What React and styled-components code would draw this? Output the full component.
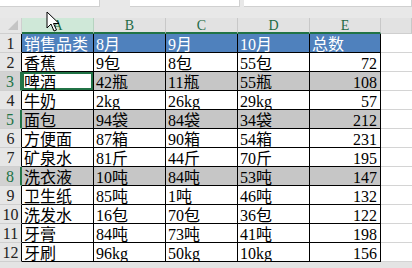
import React from 'react';
import styled, { createGlobalStyle } from 'styled-components';

const GlobalStyle = createGlobalStyle`
  html, body {
    margin: 0;
    padding: 0;
    background: #e8e8e8;
    overflow: hidden;
  }
`;

const Screen = styled.div`
  position: relative;
  width: 412px;
  height: 268px;
  overflow: hidden;
  background: #e8e8e8;
  font-family: "Liberation Serif", "Noto Sans CJK SC", serif;
`;

const FormulaStrip = styled.div`
  display: flex;
  height: 7px;
`;

const Box = styled.div`
  width: ${(p) => p.w}px;
  margin-right: ${(p) => p.gap || 0}px;
  flex: ${(p) => (p.grow ? 1 : 'none')};
  background: #fff;
  border-bottom: 1px solid #d0d0d0;
  border-right: 1px solid #d0d0d0;
  box-sizing: border-box;
`;

const Spacer = styled.div`
  height: 11px;
`;

const Sheet = styled.div`
  display: grid;
  grid-template-columns: 22px 72px 72px 72px 72px 71px 1fr;
  grid-template-rows: 16px repeat(12, 19px) 1fr;
  height: 250px;
`;

const Corner = styled.div`
  position: relative;
  background: #e6e6e6;
  border-right: 1px solid #cfcfcf;
  border-bottom: 1px solid #cfcfcf;
  box-sizing: border-box;
  &::after {
    content: '';
    position: absolute;
    right: 3px;
    bottom: 3px;
    width: 0;
    height: 0;
    border-left: 10px solid transparent;
    border-bottom: 10px solid #c4c4c4;
  }
`;

const ColHead = styled.div`
  display: flex;
  align-items: center;
  justify-content: center;
  background: ${(p) => (p.active ? '#cfe8d8' : '#e2e2e2')};
  border-right: 1px solid ${(p) => (p.active ? '#b6d3c0' : '#c8c8c8')};
  border-bottom: ${(p) => (p.line ? '2px solid #217346' : '1px solid #cfcfcf')};
  box-sizing: border-box;
  color: #1e6b45;
  font-size: 14px;
  padding-top: 1px;
`;

const RowHead = styled.div`
  display: flex;
  align-items: center;
  justify-content: center;
  background: ${(p) => (p.active ? '#d2d2d2' : '#e6e6e6')};
  color: ${(p) => (p.active ? '#217346' : '#222')};
  border-bottom: 1px solid #cfcfcf;
  border-right: ${(p) => (p.active ? '2px solid #217346' : '1px solid #000')};
  box-sizing: border-box;
  font-size: 16px;
  line-height: 19px;
  padding-top: 1px;
`;

const Cell = styled.div`
  background: ${(p) => (p.head ? '#4f81bd' : p.shade ? '#c6c6c6' : '#fff')};
  color: ${(p) => (p.head ? '#fff' : '#000')};
  border-right: 1px solid #000;
  border-bottom: 1px solid #000;
  box-sizing: border-box;
  font-size: 16px;
  line-height: 19px;
  padding: 1px 3px 0 2px;
  text-align: ${(p) => (p.num ? 'right' : 'left')};
  white-space: nowrap;
  overflow: hidden;
  box-shadow: ${(p) => (p.selected ? 'inset 0 0 0 2px #217346' : 'none')};
`;

const Empty = styled.div`
  background: #fff;
  border-bottom: 1px solid #d4d4d4;
  box-sizing: border-box;
`;

const BottomFill = styled.div`
  grid-column: 1 / -1;
  background: #e4e4e4;
`;

const Pointer = styled.svg`
  position: absolute;
  left: 46px;
  top: 11px;
`;

const header = ['销售品类', '8月', '9月', '10月', '总数'];

const rows = [
  ['香蕉', '9包', '8包', '55包', '72'],
  ['啤酒', '42瓶', '11瓶', '55瓶', '108'],
  ['牛奶', '2kg', '26kg', '29kg', '57'],
  ['面包', '94袋', '84袋', '34袋', '212'],
  ['方便面', '87箱', '90箱', '54箱', '231'],
  ['矿泉水', '81斤', '44斤', '70斤', '195'],
  ['洗衣液', '10吨', '84吨', '53吨', '147'],
  ['卫生纸', '85吨', '1吨', '46吨', '132'],
  ['洗发水', '16包', '70包', '36包', '122'],
  ['牙膏', '84吨', '73吨', '41吨', '198'],
  ['牙刷', '96kg', '50kg', '10kg', '156'],
];

const shaded = [3, 5, 8];

const App = () => {
  return (
    <Screen>
      <GlobalStyle />
      <FormulaStrip>
        <Box w={100} gap={30} />
        <Box w={110} gap={4} />
        <Box grow />
      </FormulaStrip>
      <Spacer />
      <Sheet>
        <Corner />
        {['A', 'B', 'C', 'D', 'E'].map((c, i) => (
          <ColHead key={c} active={i === 0} line>
            {c}
          </ColHead>
        ))}
        <ColHead />

        <RowHead>1</RowHead>
        {header.map((h) => (
          <Cell key={h} head>
            {h}
          </Cell>
        ))}
        <Empty />

        {rows.map((r, ri) => {
          const n = ri + 2;
          const shade = shaded.includes(n);
          return (
            <React.Fragment key={n}>
              <RowHead active={shade}>{n}</RowHead>
              {r.map((v, ci) => (
                <Cell
                  key={ci}
                  shade={shade && !(n === 3 && ci === 0)}
                  selected={n === 3 && ci === 0}
                  num={ci === 4}
                >
                  {v}
                </Cell>
              ))}
              <Empty />
            </React.Fragment>
          );
        })}
        <BottomFill />
      </Sheet>
      <Pointer width="14" height="22" viewBox="0 0 14 22">
        <path
          d="M1 1 L1 17 L5 13 L8 20 L10.5 19 L7.5 12.5 L13 12.5 Z"
          fill="#fff"
          stroke="#000"
          strokeWidth="1"
          strokeLinejoin="round"
        />
      </Pointer>
    </Screen>
  );
};

export default App;
